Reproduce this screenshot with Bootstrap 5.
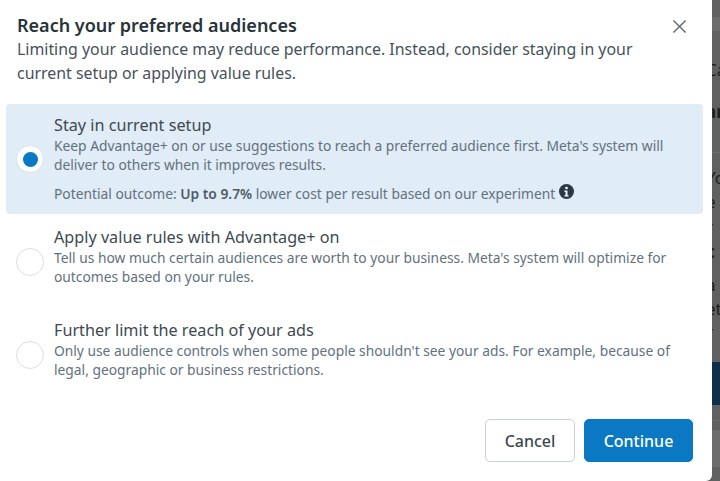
<!DOCTYPE html>
<html lang="en">
<head>
  <meta charset="UTF-8">
  <meta name="viewport" content="width=device-width, initial-scale=1.0">
  <link href="https://cdn.jsdelivr.net/npm/bootstrap@5.3.1/dist/css/bootstrap.min.css" rel="stylesheet">
  <title>Reach your preferred audiences</title>
  <style>
    html, body { height: 481px; overflow: hidden; }
    body {
      background: #5f6061;
      font-family: "Noto Sans", "Liberation Sans", sans-serif;
      color: #1c2b33;
    }
    .page-shell { height: 481px; }
    .dialog {
      width: 712px;
      height: 481px;
      border-radius: 0 0 6px 0;
      padding: 13px 8px 19px 6px;
      flex: none;
    }
    .dialog-head { padding: 0 9px 0 11px; }
    .dialog-title { font-size: 18px; line-height: 24px; font-weight: 600; color: #283339; }
    .dialog-sub { font-size: 15.9px; line-height: 24px; color: #46525a; width: 640px; }
    .btn-close-x { width: 32px; height: 24px; padding: 0; background: none; border: 0; color: #5d6a73; flex: none; }
    .options { margin-top: 19px; width: 697px; }
    .option { padding: 0 12px 0 10px; border-radius: 4px; }
    .option.selected { background: #e0ecf6; height: 110px; margin-bottom: 1px; }
    .option.plain { height: 93px; }
    .option.plain .option-body { padding-bottom: 10px; }
    .radio-dot {
      width: 28px; height: 28px; border-radius: 50%;
      background: #fff; border: 1px solid #d7dfe5;
      flex: none;
    }
    .radio-dot.on { border-color: #d9e3ea; }
    .radio-dot.on::after {
      content: ""; width: 15px; height: 15px; border-radius: 50%; background: #0a78c2;
    }
    .option-body { margin-left: 10px; }
    .option-title { font-size: 16.2px; line-height: 20px; color: #3d494f; }
    .option-text { font-size: 13.8px; line-height: 19.5px; color: #62717d; margin-top: 1px; }
    .option-outcome { margin-top: 9px; }
    .option-outcome b { font-weight: 600; color: #4f5c66; }
    .btn-meta { height: 43px; font-size: 16px; font-weight: 500; border-radius: 5px; }
    .btn-cancel { width: 90px; background: #fff; border: 1px solid #c9d2d9; color: #3d494f; }
    .btn-continue { width: 109px; background: #0a78c2; border: 1px solid #0a78c2; color: #fff; }
    .btn-continue:hover { background: #0a78c2; color: #fff; }
    .dialog-foot { padding-right: 11px; gap: 9px; }
    /* page behind the dialog, only a sliver shows */
    .backdrop-strip {
      width: 8px; overflow: hidden; display: grid;
      grid-template-rows: 17px 14px 27px 24px 18px 24px 28px 14px 24px 25px 25px 22px 11px 24px 23px 24px 18px 43px 15px 10px 37px 14px;
      font-size: 17px; color: #1d1e1f;
    }
    .backdrop-strip > div { margin-left: -6px; white-space: nowrap; line-height: 24px; }
    .backdrop-strip .bold { font-weight: 700; }
    .strip-light { background: #6b6c6d; margin-left: 0 !important; }
    .strip-line { border-top: 1px solid #6c6d6e; margin-left: 0 !important; }
    .strip-band { background: #0d2f4a; margin-left: 0 !important; }
  </style>
</head>
<body>
  <div class="page-shell d-flex">
    <div class="dialog bg-white d-flex flex-column">
      <div class="dialog-head d-flex justify-content-between">
        <div>
          <div class="dialog-title">Reach your preferred audiences</div>
          <div class="dialog-sub">Limiting your audience may reduce performance. Instead, consider staying in your current setup or applying value rules.</div>
        </div>
        <button type="button" class="btn-close-x" aria-label="Close">
          <svg width="15" height="15" viewBox="0 0 16 16" fill="none" stroke="currentColor" stroke-width="1.5"><path d="M1.5 1.5l13 13M14.5 1.5l-13 13"/></svg>
        </button>
      </div>

      <div class="options">
        <div class="option selected d-flex align-items-center">
          <span class="radio-dot on d-flex align-items-center justify-content-center"></span>
          <div class="option-body">
            <div class="option-title">Stay in current setup</div>
            <div class="option-text">Keep Advantage+ on or use suggestions to reach a preferred audience first. Meta's system will deliver to others when it improves results.</div>
            <div class="option-text option-outcome">Potential outcome: <b>Up to 9.7%</b> lower cost per result based on our experiment
              <svg width="15" height="15" viewBox="0 0 16 16" class="align-baseline"><circle cx="8" cy="8" r="8" fill="#283a47"/><circle cx="8" cy="4.2" r="1.4" fill="#fff"/><path d="M5.8 7h3.2v5h1.2v1.4H5.8V12h1.2V8.4H5.8z" fill="#fff"/></svg>
            </div>
          </div>
        </div>
        <div class="option plain d-flex align-items-center">
          <span class="radio-dot"></span>
          <div class="option-body">
            <div class="option-title">Apply value rules with Advantage+ on</div>
            <div class="option-text">Tell us how much certain audiences are worth to your business. Meta's system will optimize for outcomes based on your rules.</div>
          </div>
        </div>
        <div class="option plain d-flex align-items-center">
          <span class="radio-dot"></span>
          <div class="option-body">
            <div class="option-title">Further limit the reach of your ads</div>
            <div class="option-text">Only use audience controls when some people shouldn't see your ads. For example, because of legal, geographic or business restrictions.</div>
          </div>
        </div>
      </div>

      <div class="dialog-foot d-flex justify-content-end mt-auto">
        <button type="button" class="btn btn-meta btn-cancel p-0">Cancel</button>
        <button type="button" class="btn btn-meta btn-continue p-0">Continue</button>
      </div>
    </div>
    <div class="backdrop-strip">
      <div></div>
      <div class="strip-light"></div>
      <div></div>
      <div>Ca</div>
      <div></div>
      <div class="bold">ar</div>
      <div></div>
      <div class="strip-line"></div>
      <div>Yo</div>
      <div>e</div>
      <div>r</div>
      <div class="bold">c</div>
      <div></div>
      <div>a</div>
      <div>et</div>
      <div>r</div>
      <div></div>
      <div class="strip-band"></div>
      <div></div>
      <div class="strip-line"></div>
      <div class="strip-light"></div>
      <div></div>
    </div>
  </div>
  <script src="https://cdn.jsdelivr.net/npm/bootstrap@5.3.1/dist/js/bootstrap.bundle.min.js"></script>
</body>
</html>
